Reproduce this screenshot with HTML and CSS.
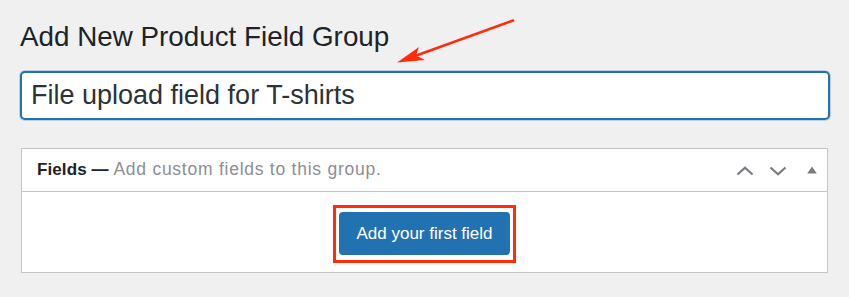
FILE: index.html
```html
<!DOCTYPE html>
<html lang="en">
<head>
<meta charset="utf-8">
<title>Add New Product Field Group</title>
<link rel="stylesheet" href="styles.css">
</head>
<body>
<div class="wrap">
  <h1 class="page-title">Add New Product Field Group</h1>
  <input class="title-input" type="text" value="File upload field for T-shirts">
  <div class="postbox">
    <div class="postbox-header">
      <h2 class="postbox-title"><strong>Fields —</strong> <span class="muted">Add custom fields to this group.</span></h2>
      <div class="handle-actions">
        <svg class="icon" width="18" height="10" viewBox="0 0 18 10"><path d="M1.5 8.5 L9 1.8 L16.5 8.5" fill="none" stroke="#787c82" stroke-width="2.2"/></svg>
        <svg class="icon" width="18" height="10" viewBox="0 0 18 10"><path d="M1.5 1.5 L9 8.2 L16.5 1.5" fill="none" stroke="#787c82" stroke-width="2.2"/></svg>
        <svg class="icon tri" width="10" height="8" viewBox="0 0 10 8"><path d="M5 0.5 L9.8 7.5 L0.2 7.5 Z" fill="#787c82"/></svg>
      </div>
    </div>
    <div class="postbox-body">
      <div class="highlight">
        <button class="primary-btn" type="button">Add your first field</button>
      </div>
    </div>
  </div>
</div>
<svg class="annot-arrow" width="849" height="297" viewBox="0 0 849 297">
  <line x1="513" y1="20.5" x2="415" y2="56" stroke="#ff2d0d" stroke-width="2.6" stroke-linecap="round"/>
  <path d="M397 62.5 L419 47 L416 55.5 L425 60 Z" fill="#ff2d0d"/>
</svg>
</body>
</html>
```
FILE: styles.css
```css
html, body {
  margin: 0;
  padding: 0;
}
body {
  background: #f0f0f1;
  font-family: "Liberation Sans", Arial, sans-serif;
  color: #1d2327;
  width: 849px;
  height: 297px;
  overflow: hidden;
  position: relative;
}
.wrap {
  padding: 19px 19px 0 20px;
}
.page-title {
  margin: 0 0 16px 0;
  font-size: 27.8px;
  line-height: 1.3;
  font-weight: 400;
  color: #1d2327;
}
.title-input {
  display: block;
  box-sizing: border-box;
  width: 100%;
  height: 49px;
  margin: 0;
  padding: 0 9px;
  border: 2px solid #2271b1;
  border-radius: 5px;
  box-shadow: 0 0 0 1px rgba(34, 113, 177, 0.25);
  background: #fff;
  font-family: "Liberation Sans", Arial, sans-serif;
  font-size: 27px;
  color: #2c3338;
  outline: none;
}
.postbox {
  margin: 28px 2px 0 1px;
  background: #fff;
  border: 1px solid #c3c4c7;
}
.postbox-header {
  display: flex;
  align-items: center;
  justify-content: space-between;
  height: 42px;
  padding: 0 10px 0 15px;
  border-bottom: 1px solid #c3c4c7;
}
.postbox-title {
  margin: 0;
  font-size: 17px;
  line-height: 1;
  font-weight: 400;
  color: #1d2327;
}
.postbox-title strong {
  font-weight: 700;
  letter-spacing: 0.1px;
}
.muted {
  color: #8c8f94;
  font-size: 17.5px;
  letter-spacing: 0.75px;
}
.handle-actions {
  display: flex;
  align-items: center;
  gap: 15px;
  padding-top: 2px;
}
.icon {
  display: block;
}
.tri {
  margin-left: 5px;
  margin-top: -2px;
}
.postbox-body {
  display: flex;
  justify-content: center;
  padding: 13px 0 9px;
}
.highlight {
  border: 3px solid #ff2d0d;
  padding: 4px 3px 5px;
  display: flex;
}
.primary-btn {
  display: block;
  height: 43px;
  padding: 0 17px;
  margin: 0;
  border: 0;
  border-radius: 4px;
  background: #2271b1;
  color: #fff;
  font-family: "Liberation Sans", Arial, sans-serif;
  font-size: 17px;
  cursor: pointer;
}
.annot-arrow {
  position: absolute;
  left: 0;
  top: 0;
  pointer-events: none;
}
```
